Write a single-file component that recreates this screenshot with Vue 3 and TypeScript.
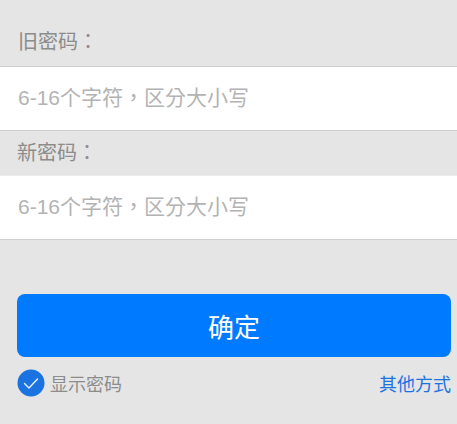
<template>
  <div class="page">
    <div class="label first">旧密码：</div>
    <div class="field">
      <input class="input" type="password" placeholder="6-16个字符，区分大小写" />
    </div>
    <div class="label second">新密码：</div>
    <div class="field">
      <input class="input" type="password" placeholder="6-16个字符，区分大小写" />
    </div>
    <button class="confirm">确定</button>
    <div class="options">
      <label class="show-pwd">
        <svg class="check" width="28" height="28" viewBox="0 0 28 28">
          <circle cx="14" cy="14" r="13.5" fill="#1a73e0" />
          <path d="M7.5 14.5l4.5 4.5 8.5-9" fill="none" stroke="#e8f0fb" stroke-width="1.4" stroke-linecap="round" stroke-linejoin="round" />
        </svg>
        <span>显示密码</span>
      </label>
      <a class="other">其他方式</a>
    </div>
  </div>
</template>

<script setup lang="ts">
</script>

<style>
html,
body {
  margin: 0;
  background: #e5e5e5;
}
</style>

<style scoped>
.page {
  height: 424px;
  box-sizing: border-box;
  background: #e5e5e5;
  font-family: "Liberation Sans", "Noto Sans CJK TC", sans-serif;
  overflow: hidden;
}

.label {
  display: flex;
  align-items: center;
  padding-left: 18px;
  font-size: 20px;
  color: #8c8c8c;
  box-sizing: border-box;
}

.first {
  height: 66px;
  padding-top: 15px;
}

.second {
  height: 44px;
  padding-left: 17px;
  padding-bottom: 4px;
}

.field {
  height: 63px;
  background: #fff;
  border-top: 1px solid #cfcfcf;
  border-bottom: 1px solid #cfcfcf;
  display: flex;
}

.field + .second + .field {
  border-top-color: #ececec;
}

.input {
  flex: 1;
  border: none;
  outline: none;
  background: transparent;
  padding: 0 18px 2px;
  font-family: inherit;
  font-size: 21px;
}

.input::placeholder {
  color: #b3b3b3;
  opacity: 1;
}

.confirm {
  display: block;
  width: 434px;
  height: 63px;
  margin: 54px 0 0 17px;
  border: none;
  border-radius: 8px;
  background: #007aff;
  color: #fff;
  font-family: inherit;
  font-size: 26px;
}

.options {
  display: flex;
  align-items: center;
  justify-content: space-between;
  margin: 12px 6px 0 17px;
}

.show-pwd {
  display: flex;
  align-items: center;
  gap: 5px;
  font-size: 18px;
  color: #8c8c8c;
}

.check {
  display: block;
}

.other {
  font-size: 18px;
  color: #1a73e0;
}
</style>
